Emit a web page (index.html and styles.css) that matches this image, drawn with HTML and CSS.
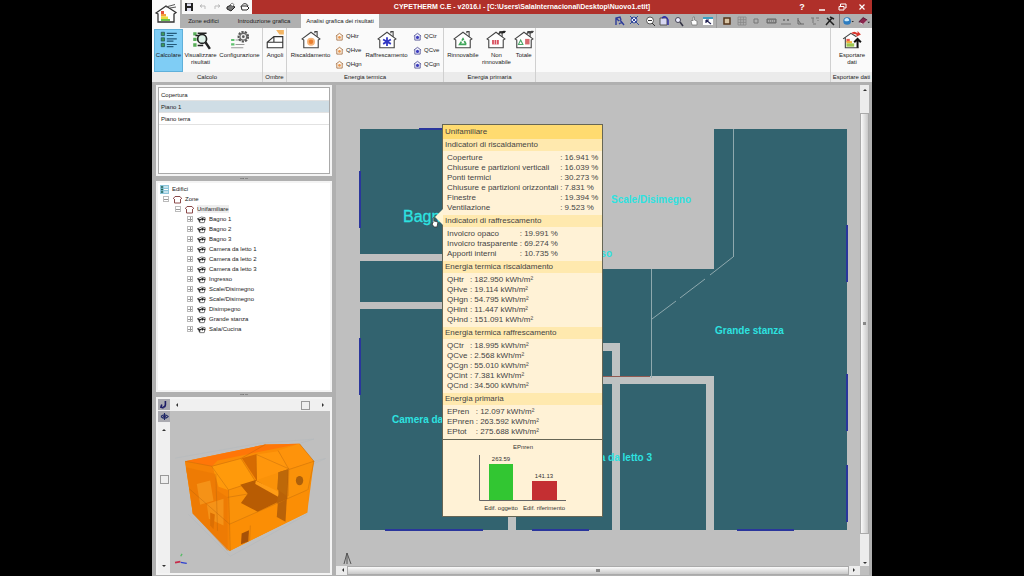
FILE: index.html
```html
<!DOCTYPE html>
<html lang="it">
<head>
<meta charset="utf-8">
<title>CYPETHERM C.E</title>
<link rel="stylesheet" href="styles.css">
</head>
<body>
<svg class="defs" aria-hidden="true">
  <symbol id="house" viewBox="0 0 18 18"><path d="M1 8 9 2l8 6-1.500 1V16h-13V9z" fill="#fff" stroke="#444" stroke-width="1"/><path d="M12.500 3V1.500h2V6" fill="none" stroke="#444"/></symbol>
  <symbol id="heat" viewBox="0 0 18 18"><use href="#house"/><circle cx="9" cy="10.500" r="3.600" fill="#f6b67c"/><circle cx="9" cy="10.500" r="2" fill="#ea7f30"/></symbol>
  <symbol id="cool" viewBox="0 0 18 18"><use href="#house"/><path d="M9 6.500v8M5.500 8.500l7 4M12.500 8.500l-7 4" stroke="#3137c4" stroke-width="1.600"/></symbol>
  <symbol id="mini-heat" viewBox="0 0 10 10"><path d="M1 4.500 5 1.500l4 3M2 4v5h6V4" fill="#fff6e8" stroke="#a9774e"/><circle cx="5" cy="6" r="1.500" fill="#e8954e"/></symbol>
  <symbol id="mini-cool" viewBox="0 0 10 10"><path d="M1 4.500 5 1.500l4 3M2 4v5h6V4" fill="#eef" stroke="#5a5a98"/><circle cx="5" cy="6" r="1.700" fill="#3b3bbd"/></symbol>
  <symbol id="zone" viewBox="0 0 9 9"><path d="M0 4 2 1.500h5L9 4M1.500 4v4h6V4" fill="#fff" stroke="#8b4a4a"/></symbol>
  <symbol id="room" viewBox="0 0 10 9"><path d="M1 3.500q4-3 8-1v2L8 8H3z" fill="#fff" stroke="#444" stroke-width=".8"/><path d="M.5 3.500 3 5l3-1.500L9 5M3 5v2M6 3.500v2" fill="none" stroke="#111" stroke-width="1.200"/></symbol>
</svg>
<div class="app">
  <header class="header">
    <button class="logo" aria-label="Menu"><svg viewBox="0 0 27 27"><path d="M3 12 13 5l10 6.500-2 1.500v8H5v-8z" fill="#fff" stroke="#333" stroke-width="1.300"/><path d="M13 6 22 3.500M17 7l6-1" stroke="#555"/><path d="M8 10h3v3H8z" fill="#e3523b"/><path d="M8 13h5v2.500H8z" fill="#f4a13c"/><path d="M8 15.500h7V18H8z" fill="#e8dc3c"/><path d="M8 18h9v2H8z" fill="#6cc04c"/></svg></button>
    <div class="head-rows">
      <div class="titlebar">
        <div class="quick">
          <button aria-label="Salva"><svg viewBox="0 0 10 10"><path d="M1 1h8v8H1z" fill="#222"/><path d="M3 1.500h4V4H3zM3 6h4v3H3z" fill="#dde"/></svg></button>
          <button aria-label="Annulla"><svg viewBox="0 0 10 10"><path d="M2 4h5v3M2 4l2-1.500M2 4l2 1.500" fill="none" stroke="#bbb"/></svg></button>
          <button aria-label="Ripeti"><svg viewBox="0 0 10 10"><path d="M8 4H3v3M8 4 6 2.500M8 4 6 5.500" fill="none" stroke="#bbb"/></svg></button>
          <button aria-label="Stampa"><svg viewBox="0 0 10 10"><path d="M1 5 5 3l4 2-4 4-4-2z" fill="#777" stroke="#222"/><path d="M4 3 6 1l2 1.500-1 2z" fill="#fff" stroke="#444" stroke-width=".6"/></svg></button>
          <button aria-label="Anteprima"><svg viewBox="0 0 10 10"><path d="M1 4h6l2 2-2 2H2z" fill="#fff" stroke="#222"/><path d="M2 3.500C3 1 7 1 8 4" fill="none" stroke="#333"/></svg></button>
        </div>
        <h1 class="title">CYPETHERM C.E - v2016.i - [C:\Users\SalaInternacional\Desktop\Nuovo1.etit]</h1>
        <div class="window-buttons">
          <button aria-label="Aiuto">?</button>
          <button aria-label="Riduci"><svg viewBox="0 0 10 10"><path d="M2 8h6" stroke="#fff" stroke-width="1.500"/></svg></button>
          <button aria-label="Ripristina"><svg viewBox="0 0 10 10"><path d="M2 4.500h5V8H2zM3.500 4V2H9v4H7.500" fill="none" stroke="#fff"/></svg></button>
          <button aria-label="Chiudi"><svg viewBox="0 0 10 10"><path d="m2.500 2.500 5 5m0-5-5 5" stroke="#fff" stroke-width="1.200"/></svg></button>
        </div>
      </div>
      <div class="tabrow">
        <nav class="tabs">
          <button class="tab tab-zone">Zone edifici</button>
          <button class="tab tab-intro">Introduzione grafica</button>
          <button class="tab tab-analysis active">Analisi grafica dei risultati</button>
        </nav>
        <div class="tools">
          <button aria-label="Vista precedente"><svg viewBox="0 0 12 12"><path d="M2 10V3l4-1 1 3M2 3l3 3M6 5l4 5M5 9l3-2" fill="none" stroke="#2d3c9a" stroke-width="1.400"/></svg></button>
          <button aria-label="Zoom tutto"><svg viewBox="0 0 12 12"><circle cx="5" cy="5" r="3" fill="#eef" stroke="#334a9a"/><path d="m7 7 3 3M1 1l8 8M9 1 1 9" stroke="#334a9a"/></svg></button>
          <button aria-label="Zoom"><svg viewBox="0 0 12 12"><circle cx="6" cy="5.500" r="3.500" fill="#fff" stroke="#555"/><path d="M4 5.500h4M8 8l3 3" stroke="#333"/></svg></button>
          <button aria-label="Ridisegna"><svg viewBox="0 0 12 12"><path d="M2 3h7v7H2z" fill="#d7d7f2" stroke="#555"/><path d="M4 3q4-3 6 2v5" fill="none" stroke="#2f2fa8" stroke-width="1.500"/></svg></button>
          <button aria-label="Zoom finestra"><svg viewBox="0 0 12 12"><circle cx="5" cy="5" r="2.500" fill="#eef" stroke="#445"/><path d="m7 7 3 4" stroke="#334" stroke-width="1.500"/></svg></button>
          <button aria-label="Sposta"><svg viewBox="0 0 12 12"><path d="M4 10 3 6l1-1 1 1V2h1.500v3L9 6v4z" fill="#fff" stroke="#777" stroke-width=".8"/></svg></button>
          <button aria-label="Vista"><svg viewBox="0 0 12 12"><path d="M1 2h10v8H1z" fill="#fff"/><path d="M1 2h10v2H1z" fill="#399fc4"/><path d="m4 5 5 4M4 5v3M4 5h3" stroke="#225" stroke-width="1.200"/></svg></button>
          <i class="sep"></i>
          <button aria-label="Cornice"><svg viewBox="0 0 12 12"><path d="M3 3h6v6H3z" fill="#d8c4a4" stroke="#54351a" stroke-width="1.500"/></svg></button>
          <button aria-label="Griglia"><svg viewBox="0 0 12 12"><path d="M2 2h8v8H2zM4.700 2v8M7.400 2v8M2 4.700h8M2 7.400h8" fill="none" stroke="#888" stroke-width=".8"/></svg></button>
          <button aria-label="Catture"><svg viewBox="0 0 12 12"><path d="M4 4h4v4H4z" fill="none" stroke="#777"/></svg></button>
          <button aria-label="Tastiera"><svg viewBox="0 0 12 12"><path d="M2 4h9v4H2z" fill="#888" stroke="#666"/><path d="M3 6h7" stroke="#ccc" stroke-dasharray="1"/></svg></button>
          <button aria-label="Quote"><svg viewBox="0 0 12 12"><path d="M1 9h10M3 4l2 2m0-2L3 6M7 4l2 2m0-2L7 6" stroke="#777"/></svg></button>
          <button aria-label="Ortogonale"><svg viewBox="0 0 12 12"><path d="M4 3v6h6M4 5l3 4" fill="none" stroke="#666"/></svg></button>
          <button aria-label="Riferimenti"><svg viewBox="0 0 12 12"><path d="M2 3h3M7 3h3M4 3v5M9 5v1M4 9h3" stroke="#777"/></svg></button>
          <button aria-label="Strumenti"><svg viewBox="0 0 12 12"><path d="m2 10 6-7M3 3l7 7M6 2l4 2" stroke="#222" stroke-width="1.500"/></svg></button>
        </div>
        <div class="help-tools">
          <button aria-label="Web"><svg viewBox="0 0 14 12"><circle cx="6" cy="6" r="4.500" fill="#2d7cc0"/><path d="M3 4q3-3 5 0T3 6z" fill="#c9e8fa"/><path d="M11 6h3l-1.500 1.500z" fill="#222"/></svg></button>
          <button aria-label="Guida"><svg viewBox="0 0 14 12"><path d="m1 7 5-5 5 3-5 5z" fill="#8b264d" stroke="#4a1730"/><path d="m2 8 4 2 5-5" fill="none" stroke="#fff"/><path d="M11 7h3l-1.500 1.500z" fill="#222"/></svg></button>
        </div>
      </div>
    </div>
  </header>

  <div class="ribbon">
    <section class="group group-calc">
      <div class="group-body">
        <button class="big selected w-calc"><svg viewBox="0 0 18 18"><path d="M2 2h3v3H2zM2 7h3v3H2zM2 12h3v3H2z" fill="#3b9a5a" stroke="#245" stroke-width=".6"/><path d="M7 3h9M7 8h9M7 13h9M7 5h6M7 10h6M7 15h6" stroke="#245a7a"/></svg><span>Calcolare</span></button>
        <button class="big w-view"><svg viewBox="0 0 18 18"><path d="M2 2h3v3H2zM2 7h3v3H2zM2 12h3v3H2z" fill="#58ad58"/><path d="M6 3h8M6 14h5M4 5h4" stroke="#222" stroke-width="1.300"/><circle cx="10" cy="8" r="4" fill="#dff3ea" stroke="#222" stroke-width="1.500"/><path d="m13 11 4 6" stroke="#222" stroke-width="2.200"/></svg><span>Visualizzare<br>risultati</span></button>
        <button class="big w-config"><svg viewBox="0 0 18 18"><path d="M1 8h3v2H1zM1 12h3v2H1z" fill="#5fc06f"/><path d="M5 9h5M5 13h8M1 16h11" stroke="#999"/><circle cx="12" cy="6" r="4.300" fill="#ddd" stroke="#555" stroke-width="1.800" stroke-dasharray="2 1"/><circle cx="12" cy="6" r="3" fill="#eee" stroke="#666"/><circle cx="12" cy="6" r="1.200" fill="#555"/></svg><span>Configurazione</span></button>
      </div>
      <h2>Calcolo</h2>
    </section>
    <section class="group group-shade">
      <div class="group-body"><button class="big"><svg viewBox="0 0 18 18"><path d="M2 16v-5l6-5h8v10zM8 6v5H2M8 11h8" fill="#fff" stroke="#333"/><path d="M10 0h7v4h-4z" fill="#f2b463"/></svg><span>Angoli</span></button></div>
      <h2>Ombre</h2>
    </section>
    <section class="group group-thermal">
      <div class="group-body">
        <button class="big w-heat"><svg><use href="#heat"/></svg><span>Riscaldamento</span></button>
        <div class="smalls">
          <button><svg><use href="#mini-heat"/></svg>QHtr</button>
          <button><svg><use href="#mini-heat"/></svg>QHve</button>
          <button><svg><use href="#mini-heat"/></svg>QHgn</button>
        </div>
        <button class="big w-cool"><svg><use href="#cool"/></svg><span>Raffrescamento</span></button>
        <div class="smalls">
          <button><svg><use href="#mini-cool"/></svg>QCtr</button>
          <button><svg><use href="#mini-cool"/></svg>QCve</button>
          <button><svg><use href="#mini-cool"/></svg>QCgn</button>
        </div>
      </div>
      <h2>Energia termica</h2>
    </section>
    <section class="group group-primary">
      <div class="group-body">
        <button class="big w-source"><svg viewBox="0 0 18 18"><use href="#house"/><path d="m6 13 3-5 3 5zM6 13h6" fill="none" stroke="#3fa65a" stroke-width="1.500" stroke-dasharray="3 1"/></svg><span>Rinnovabile</span></button>
        <button class="big w-source"><svg viewBox="0 0 18 18"><use href="#house"/><path d="M5.500 9h6v4h-6z" fill="#d84d5c"/><path d="M7.500 9v4M9.500 9v4" stroke="#fff" stroke-width=".6"/><path d="M11 4q0-3 3-2 1-2 4-1-1 3-5 2z" fill="#222"/></svg><span>Non<br>rinnovabile</span></button>
        <button class="big w-total"><svg viewBox="0 0 18 18"><use href="#house"/><path d="M10 8h4v5h-4z" fill="#d86a70"/><path d="m4 13 2-4 2 4z" fill="none" stroke="#4aa668"/><path d="M11 4q0-3 3-2 1-2 4-1-1 3-5 2z" fill="#444"/></svg><span>Totale</span></button>
      </div>
      <h2>Energia primaria</h2>
    </section>
    <div class="group group-fill"><div class="group-body"></div><h2></h2></div>
    <section class="group group-export">
      <div class="group-body"><button class="big"><svg viewBox="0 0 18 18"><path d="M1 8 8 3l5 3M3 7v9h12" fill="#fff" stroke="#444"/><path d="M4 8h3v3H4z" fill="#e85a4a"/><path d="M4 10h5v2H4z" fill="#f0b03c"/><path d="M4 12h7v3H4z" fill="#9cc850"/><path d="M14 16V9m-3 2 3-3 3 3" fill="none" stroke="#111" stroke-width="1.800"/><path d="M8 3q3-3 6 0V1l3 3-4 2V4" fill="#d9362c"/></svg><span>Esportare<br>dati</span></button></div>
      <h2>Esportare dati</h2>
    </section>
  </div>

  <main class="work">
    <aside class="side">
      <div class="panel floors">
        <ul class="floor-list">
          <li><button>Copertura</button></li>
          <li><button class="current">Piano 1</button></li>
          <li><button>Piano terra</button></li>
        </ul>
      </div>
      <div class="split"></div>
      <div class="panel tree-panel">
        <ul class="tree">
          <li class="d0"><svg viewBox="0 0 9 9"><path d="M0 0h9v9H0z" fill="#8cc5da"/><path d="M1 2h2M1 4.500h2M1 7h2" stroke="#265" stroke-width="1.400"/><path d="M4 2h4M4 4.500h4M4 7h4" stroke="#fff"/></svg><span>Edifici</span></li>
          <li class="d1"><i class="box minus"></i><svg><use href="#zone"/></svg><span>Zone</span></li>
          <li class="d2"><i class="box minus"></i><svg><use href="#zone"/></svg><span class="picked">Unifamiliare</span></li>
          <li class="d3"><i class="box"></i><svg><use href="#room"/></svg><span>Bagno 1</span></li>
          <li class="d3"><i class="box"></i><svg><use href="#room"/></svg><span>Bagno 2</span></li>
          <li class="d3"><i class="box"></i><svg><use href="#room"/></svg><span>Bagno 3</span></li>
          <li class="d3"><i class="box"></i><svg><use href="#room"/></svg><span>Camera da letto 1</span></li>
          <li class="d3"><i class="box"></i><svg><use href="#room"/></svg><span>Camera da letto 2</span></li>
          <li class="d3"><i class="box"></i><svg><use href="#room"/></svg><span>Camera da letto 3</span></li>
          <li class="d3"><i class="box"></i><svg><use href="#room"/></svg><span>Ingresso</span></li>
          <li class="d3"><i class="box"></i><svg><use href="#room"/></svg><span>Scale/Disimegno</span></li>
          <li class="d3"><i class="box"></i><svg><use href="#room"/></svg><span>Scale/Disimegno</span></li>
          <li class="d3"><i class="box"></i><svg><use href="#room"/></svg><span>Disimpegno</span></li>
          <li class="d3"><i class="box"></i><svg><use href="#room"/></svg><span>Grande stanza</span></li>
          <li class="d3"><i class="box"></i><svg><use href="#room"/></svg><span>Sala/Cucina</span></li>
        </ul>
      </div>
      <div class="split"></div>
      <div class="panel model">
        <div class="model-left">
          <button class="tool" aria-label="Ruota"><svg viewBox="0 0 10 10"><path d="M6 1v4q0 3-3 3M2 5l-1 3 3 1" fill="none" stroke="#1d1d66" stroke-width="1.800"/></svg></button>
          <button class="tool" aria-label="Orbita"><svg viewBox="0 0 10 10"><path d="M1 5q4-4 8 0-4 4-8 0M5 1v8" fill="none" stroke="#1d2a66" stroke-width="1.200"/><circle cx="5" cy="5" r="1.500" fill="#226"/></svg></button>
          <div class="bar vertical"><button aria-label="Su"><i class="arrow up"></i></button><i class="knob"></i><button aria-label="Giù"><i class="arrow down"></i></button></div>
        </div>
        <div class="model-main">
          <div class="bar horizontal"><button aria-label="Sinistra"><i class="arrow left"></i></button><i class="knob"></i><button aria-label="Destra"><i class="arrow right"></i></button></div>
          <svg class="model-view" viewBox="60 72 478 483" preserveAspectRatio="xMidYMid meet">
            <path d="M75 213 330 168l160-12-40 12M490 222l35-8-45 20-12 148-228 124-125-125" fill="none" stroke="#b5babd" stroke-width="2"/>
            <path d="m105 222 240-50 102-2 43 52-20 153-232 115-110-112z" fill="#fa8c06"/>
            <path d="m105 222 240-50 102-2-130 26-115 24-17 18z" fill="#ff7608"/>
            <path d="m105 222 80 15 30 65 22 8v180L128 378z" fill="#f58205"/>
            <path d="m107 240 90 20 5 50 30 20v160L128 378l-10-80z" fill="#e87604" opacity=".55"/>
            <path d="m140 290 40-10 10 60-40 12zM170 350l50-16v80l-44-20z" fill="#f59217"/>
            <path d="m180 375 14 6-4 44-10-12z" fill="#dc6f03"/>
            <path d="m187 238 85-24 43 68-80 26-30-10z" fill="#ff9a0b"/>
            <path d="m275 213 43-12 2 80z" fill="#d66b02"/>
            <path d="m318 202 65-10 35 54-98 34z" fill="#ff960c"/>
            <path d="m383 190 64-20 43 52-75 24z" fill="#fe930b"/>
            <path d="m235 308 80-28 100-34 75-24-16 90-234 98z" fill="#fa9209"/>
            <path d="m270 292 46-14 90 55-84 40-50-26 20-28z" fill="#b85c03"/>
            <path d="m316 280 94 46-10 12-85-48z" fill="#ff9c15"/>
            <path d="m384 255 30-9-6 155-28-18v-42l4-20z" fill="#b96208"/>
            <path d="m384 255 28-9-4 80-28-20z" fill="#bd6809"/>
            <ellipse cx="447" cy="280" rx="11" ry="14" fill="#ad600b"/>
            <path d="m240 410 232-102-2 67-232 115z" fill="#fb8e05"/>
            <path d="m382 348 27-13-4 68-26-14z" fill="#b96208"/>
            <path d="m274 438 22-10-2 34-22 8z" fill="#a65107"/>
            <g fill="none" stroke="#b9660c" stroke-width="1.200"><path d="m105 222 80 15 87-23 43 68-80 26-50-70M318 202l100 44 72-24M383 190l32 56-2 80M318 202v78M235 308l5 182M118 305l120 105 232-102M447 170l43 52-18 86M197 260l5 170M272 214l73-42M300 414l-2 44M232 330l60-10"/></g>
            <path d="M92 506l4-7" fill="none" stroke="#55bb66" stroke-width="4"/><path d="m92 524 18 3" stroke="#2b3fd0" stroke-width="4"/><path d="m75 525 16-3" stroke="#c62c4a" stroke-width="5"/>
          </svg>
        </div>
      </div>
    </aside>

    <section class="canvas">
      <div class="drawing">
        <svg class="plan" viewBox="336 85 524 479" preserveAspectRatio="xMinYMin meet">
          <g class="rooms">
            <path d="M360 129h230v125H360zM360 261h230v41H360zM360 309h148v221H360zM516 383h97v147h-97z"/>
            <path d="M590 269h124V129h133v401H516V350h74z"/>
          </g>
          <path class="wall" d="M590 343h30v33h94v154h-8V384h-86v146h-8V384h-22v-8h22v-25h-22z"/>
          <path class="wall" d="M508 500h8v30h-8z"/>
          <path class="thin" d="M733.500 129v128M651.500 269v109"/>
          <path class="thin" d="m733 257-23 18m-5 4-25 19m-4 3-24 18"/>
          <path d="M603 376.500h47" stroke="#925b52"/>
          <path class="window" d="M419 129h30M360 171v57M360 338v57M385 530h98M532 530h57M737 530h57M847 225v57M847 374v57M847 465v57"/>
          <text class="hover-label" x="403" y="222">Bagno 1</text>
          <text x="392" y="423">Camera da letto 2</text>
          <text x="652" y="461" text-anchor="end">Camera da letto 3</text>
          <text x="715" y="334">Grande stanza</text>
          <text x="611" y="203">Scale/Disimegno</text>
          <text x="612" y="257" text-anchor="end">Ingresso</text>
          <path d="m344 564 3-11 4 11m-4-11v11" fill="none" stroke="#555"/>
        </svg>
        <div class="tip" role="tooltip">
          <h3>Unifamiliare</h3>
          <section><h4>Indicatori di riscaldamento</h4>
            <table>
              <tr><th>Coperture</th><td>: 16.941 %</td></tr>
              <tr><th>Chiusure e partizioni verticali</th><td>: 16.039 %</td></tr>
              <tr><th>Ponti termici</th><td>: 30.273 %</td></tr>
              <tr><th>Chiusure e partizioni orizzontali</th><td>: 7.831 %</td></tr>
              <tr><th>Finestre</th><td>: 19.394 %</td></tr>
              <tr><th>Ventilazione</th><td>: 9.523 %</td></tr>
            </table></section>
          <section><h4>Indicatori di raffrescamento</h4>
            <table>
              <tr><th>Involcro opaco</th><td>: 19.991 %</td></tr>
              <tr><th>Involcro trasparente</th><td>: 69.274 %</td></tr>
              <tr><th>Apporti interni</th><td>: 10.735 %</td></tr>
            </table></section>
          <section><h4>Energia termica riscaldamento</h4>
            <table>
              <tr><th>QHtr</th><td>: 182.950 kWh/m²</td></tr>
              <tr><th>QHve</th><td>: 19.114 kWh/m²</td></tr>
              <tr><th>QHgn</th><td>: 54.795 kWh/m²</td></tr>
              <tr><th>QHint</th><td>: 11.447 kWh/m²</td></tr>
              <tr><th>QHnd</th><td>: 151.091 kWh/m²</td></tr>
            </table></section>
          <section><h4>Energia termica raffrescamento</h4>
            <table>
              <tr><th>QCtr</th><td>: 18.995 kWh/m²</td></tr>
              <tr><th>QCve</th><td>: 2.568 kWh/m²</td></tr>
              <tr><th>QCgn</th><td>: 55.010 kWh/m²</td></tr>
              <tr><th>QCint</th><td>: 7.381 kWh/m²</td></tr>
              <tr><th>QCnd</th><td>: 34.500 kWh/m²</td></tr>
            </table></section>
          <section><h4>Energia primaria</h4>
            <table>
              <tr><th>EPren</th><td>: 12.097 kWh/m²</td></tr>
              <tr><th>EPnren</th><td>: 263.592 kWh/m²</td></tr>
              <tr><th>EPtot</th><td>: 275.688 kWh/m²</td></tr>
            </table></section>
          <svg class="chart" viewBox="0 0 159 76">
            <path d="M36.500 15v45.500H123" fill="none" stroke="#666"/>
            <path d="M46 24h24v36H46z" fill="#32c632"/><path d="M89 41h25v19H89z" fill="#c42f32"/>
            <text x="80" y="9">EPnren</text><text x="58" y="21">263.59</text><text x="101" y="38">141.13</text>
            <text x="58" y="70">Edif. oggetto</text><text x="101" y="70">Edif. riferimento</text>
          </svg>
          <svg class="pointer" viewBox="0 0 10 24"><path d="m10 2-8 8 8 8z" fill="#fff5d5"/><path d="M0 16V11q1-1 1 0v3l4 1-1 5H1l-2-3z" fill="#fff" stroke="#333" stroke-width=".8"/></svg>
        </div>
      </div>
      <div class="scroll-v"><button aria-label="Su"><i class="arrow up"></i></button><div class="thumb"></div><button aria-label="Giù"><i class="arrow down"></i></button></div>
      <div class="scroll-h"><button aria-label="Sinistra"><i class="arrow left"></i></button><div class="thumb"></div><button aria-label="Destra"><i class="arrow right"></i></button></div>
    </section>
  </main>
</div>
</body>
</html>
```
FILE: styles.css
```css
* { box-sizing: border-box; }
body { margin: 0; padding: 0 152px; background: #000; color: #222; font: 6px/8px "Liberation Sans", Arial, sans-serif; }
button { border: 0; padding: 0; background: none; color: inherit; font: inherit; display: flex; align-items: center; justify-content: center; }
h1, h2, h3, h4 { margin: 0; font-size: inherit; font-weight: normal; }
ul { list-style: none; margin: 0; padding: 0; }
svg { display: block; flex: none; }
.defs { position: absolute; width: 0; height: 0; }
.app { min-height: 100vh; display: flex; flex-direction: column; background: #b0b0b0; }

.header { display: flex; height: 28px; }
.logo { width: 28px; background: #fafafa; }
.logo svg { width: 27px; height: 27px; }
.head-rows { flex: 1; display: flex; flex-direction: column; }
.titlebar { display: flex; align-items: center; height: 14px; background: #b0302a; color: #fff; }
.quick { display: flex; align-items: center; justify-content: space-around; width: 72px; height: 14px; background: #f8f8f8; border-left: 2px solid #b0b0b0; }
.quick svg { width: 10px; height: 10px; }
.title { flex: 1; text-align: center; font: bold 7px/14px "Liberation Sans", Arial, sans-serif; white-space: nowrap; }
.window-buttons { display: flex; }
.window-buttons button { width: 20px; font: bold 9px/14px "Liberation Sans", Arial, sans-serif; }
.window-buttons svg { width: 10px; height: 10px; }
.tabrow { display: flex; height: 14px; background: #b0b0b0; }
.tabs { display: flex; flex: 1; }
.tab { white-space: nowrap; }
.tab-zone { width: 47px; }
.tab-intro { width: 74px; }
.tab-analysis { width: 78px; }
.tab.active { background: #fafafa; }
.tools { display: flex; width: 224px; margin-right: 2px; }
.tools button { flex: 1; }
.tools svg, .help-tools svg { width: 12px; height: 12px; }
.sep { width: 4px; border-left: 1px solid #999; }
.help-tools { display: flex; border-left: 1px solid #777; }
.help-tools button { width: 16px; }

.ribbon { display: flex; height: 54px; background: #fafafa; }
.group { display: flex; flex-direction: column; border-right: 1px solid #d0d0d0; }
.group-body { flex: 1; display: flex; padding: 1px 1px 0 2px; }
.group h2 { height: 10px; line-height: 10px; background: #ebebeb; text-align: center; white-space: nowrap; }
.group-calc { width: 111px; }
.group-shade { width: 24px; }
.group-thermal { width: 157px; }
.group-primary { width: 92px; }
.group-fill { flex: 1; }
.group-export { width: 41px; border: 0; }
.big { flex-direction: column; justify-content: flex-start; gap: 2px; padding-top: 1px; width: 100%; white-space: nowrap; text-align: center; line-height: 7px; }
.big svg { width: 20px; height: 20px; }
.selected { background: #7fcdf5; outline: 1px solid #5fb0da; outline-offset: -1px; }
.w-calc { width: 29px; }
.w-view { width: 35px; }
.w-config { width: 43px; }
.w-heat { width: 43px; }
.w-cool { width: 47px; }
.w-source { width: 34px; }
.w-total { width: 21px; }
.smalls { display: flex; flex-direction: column; gap: 4px; width: 31px; padding: 2px 0 0 3px; }
.smalls button { justify-content: flex-start; gap: 2px; height: 10px; }
.smalls svg { width: 9px; height: 9px; }

.work { flex: 1; display: flex; padding: 3px 3px 3px 4px; background: #b0b0b0; }
.side { display: flex; flex-direction: column; width: 176px; }
.panel { background: #f4f4f4; border: 2px solid #f4f4f4; }
.floors { height: 91px; }
.floor-list { height: 100%; padding: 1px 0; background: #fff; border: 1px solid #aaa; }
.floor-list button { width: 100%; height: 12px; padding-left: 2px; justify-content: flex-start; border-bottom: 1px solid #e2e2e2; }
.floor-list .current { background: #cfdde5; }
.split { height: 5px; background: linear-gradient(90deg, #777 50%, #b0b0b0 50%) center / 2px 1px no-repeat, linear-gradient(90deg, #888, #888) center / 8px 1px no-repeat; }
.tree-panel { height: 211px; background: #fff; padding: 1px 2px; }
.tree li { display: flex; align-items: center; gap: 3px; height: 10px; }
.tree svg { width: 9px; height: 9px; }
.d1 { padding-left: 3px; }
.d2 { padding-left: 15px; }
.d3 { padding-left: 27px; }
.box { width: 6px; height: 6px; margin-right: 1px; border: 1px solid #bbb; background: linear-gradient(#999, #999) center / 4px 1px no-repeat, linear-gradient(#999, #999) center / 1px 4px no-repeat; }
.box.minus { background: linear-gradient(#999, #999) center / 4px 1px no-repeat; }
.picked { background: #eee; }
.model { flex: 1; display: flex; }
.model-left { width: 12px; display: flex; flex-direction: column; }
.tool { height: 12px; background: #aaaab0; border-bottom: 1px solid #eee; }
.tool svg { width: 9px; height: 9px; }
.model-main { flex: 1; display: flex; flex-direction: column; }
.bar { display: flex; align-items: center; background: #f0f0f0; }
.bar.horizontal { height: 12px; justify-content: space-between; padding: 0 2px; }
.bar.horizontal .knob { margin: 0 10px 0 auto; }
.bar.vertical { flex: 1; flex-direction: column; justify-content: space-between; padding: 2px 0; }
.bar.vertical .knob { margin-bottom: 36px; }
.knob { width: 9px; height: 9px; border: 1px solid #999; background: #eee; }
.model-view { flex: 1; width: 100%; min-height: 0; background: #bfbfbf; }
.arrow { width: 0; height: 0; border: 2px solid transparent; }
.up { border-bottom-color: #333; }
.down { border-top-color: #333; }
.left { border-right-color: #333; }
.right { border-left-color: #333; }
.bar button, .scroll-v button, .scroll-h button { min-width: 8px; min-height: 8px; }

.canvas { flex: 1; display: grid; grid-template: 1fr 9px / 1fr 9px; margin-left: 4px; background: #bfbfbf; }
.drawing { position: relative; min-width: 0; }
.plan { width: 100%; height: 100%; }
.rooms { fill: #32636f; }
.wall { fill: #bec2c2; }
.thin { fill: none; stroke: #8fa9ae; stroke-width: 1; }
.window { stroke: #2a369c; stroke-width: 2; }
.plan text { fill: #2de2e0; font: bold 10px "Liberation Sans", Arial, sans-serif; }
.plan .hover-label { font: 16px "Liberation Sans", Arial, sans-serif; stroke: #2de2e0; stroke-width: .3; }
.scroll-v { display: flex; flex-direction: column; background: #ececec; }
.scroll-v button:first-child { height: 28px; align-items: flex-start; padding-top: 2px; }
.scroll-v button:last-child { height: 32px; align-items: flex-end; }
.scroll-v .thumb { flex: 1; border: 1px solid #aaa; background: linear-gradient(#888, #888) center / 3px 3px no-repeat, linear-gradient(90deg, #fafafa, #c8c8c8); }
.scroll-h { display: flex; background: #ececec; }
.scroll-h button { width: 11px; }
.scroll-h .thumb { flex: 1; border: 1px solid #aaa; background: linear-gradient(#888, #888) center / 4px 3px no-repeat, linear-gradient(#fafafa, #c8c8c8); }

.tip { position: absolute; left: 106px; top: 39px; width: 161px; border: 1px solid #665; background: #fff2d6; color: #444; font: 8px/10px "Liberation Sans", Arial, sans-serif; }
.tip h3 { height: 14px; padding-left: 2px; line-height: 14px; background: #ffdb70; }
.tip h4 { height: 12px; padding-left: 2px; line-height: 12px; background: #ffe9ae; }
.tip table { margin: 2px 4px; border-collapse: collapse; }
.tip th, .tip td { height: 10px; padding: 0; text-align: left; font-weight: normal; white-space: nowrap; }
.tip th { padding-right: 2px; }
.chart { width: 100%; border-top: 1px solid #665; }
.chart text { fill: #333; font: 6px "Liberation Sans", Arial, sans-serif; text-anchor: middle; }
.pointer { position: absolute; left: -10px; top: 82px; width: 10px; height: 24px; overflow: visible; }
```
